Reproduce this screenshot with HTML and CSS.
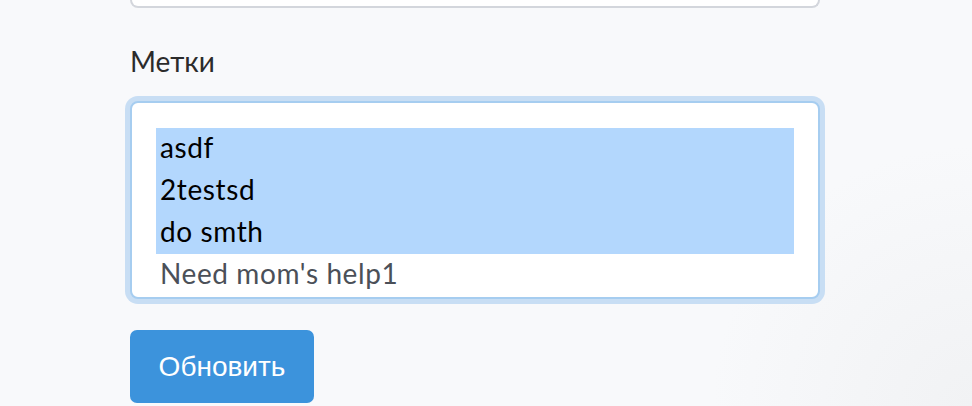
FILE: index.html
```html
<!DOCTYPE html>
<html>

<head>
	<meta charset="utf-8">
	<title>Редактирование задачи</title>
	<meta name="viewport" content="width=device-width, initial-scale=1">
	<link rel="stylesheet" href="styles.css">
</head>

<body>
	<form class='task-form'>
		<div class='field field--cut'>
			<div class='field__input'></div>
		</div>
		<div class='field'>
			<label class='field__label' for='tags'>Метки</label>
			<div class='tags' id='tags' role='listbox' aria-multiselectable='true'>
				<div class='tags__option tags__option--selected' role='option'>asdf</div>
				<div class='tags__option tags__option--selected' role='option'>2testsd</div>
				<div class='tags__option tags__option--selected' role='option'>do smth</div>
				<div class='tags__option' role='option'>Need mom's help1</div>
			</div>
		</div>
		<button class='btn' type='submit'>Обновить</button>
	</form>
</body>

</html>
```

FILE: styles.css
```css
/* page */

* {
	box-sizing: border-box;
}

html,
body {
	margin: 0;
	padding: 0;
	height: 100%;
}

body {
	background: radial-gradient(circle at 100% 100%, #f1f2f4 0, #f8f9fb 260px);
	font-family: Lato, 'Open Sans', sans-serif;
	color: #2b2b2b;
}

/* form */

.task-form {
	width: 690px;
	margin-left: 130px;
}

.field--cut .field__input {
	height: 8px;
	background: #fff;
	border: 2px solid #d3d6dc;
	border-top: none;
	border-radius: 0 0 8px 8px;
}

.field__label {
	display: block;
	margin-top: 32px;
	font-size: 28px;
	line-height: 42px;
}

/* tag list, looks like a focused multi select */

.tags {
	height: 198px;
	margin-top: 19px;
	padding: 25px 24px 0 24px;
	overflow: hidden;
	background: #fff;
	border: 2px solid #a6cdf0;
	border-radius: 8px;
	box-shadow: 0 0 0 5px #c8def4;
	font-size: 28px;
}

.tags__option {
	padding: 0 4px 4px;
	line-height: 38px;
	letter-spacing: 0.6px;
	color: #4b5058;
	white-space: nowrap;
}

.tags__option--selected {
	background: #b3d7fd;
	color: #000;
}

/* button */

.btn {
	margin-top: 31px;
	width: 184px;
	height: 73px;
	padding: 0;
	border: none;
	border-radius: 7px;
	background: #3c93dc;
	color: #fff;
	font-family: 'Liberation Sans', Arial, sans-serif;
	font-size: 28px;
}
```
